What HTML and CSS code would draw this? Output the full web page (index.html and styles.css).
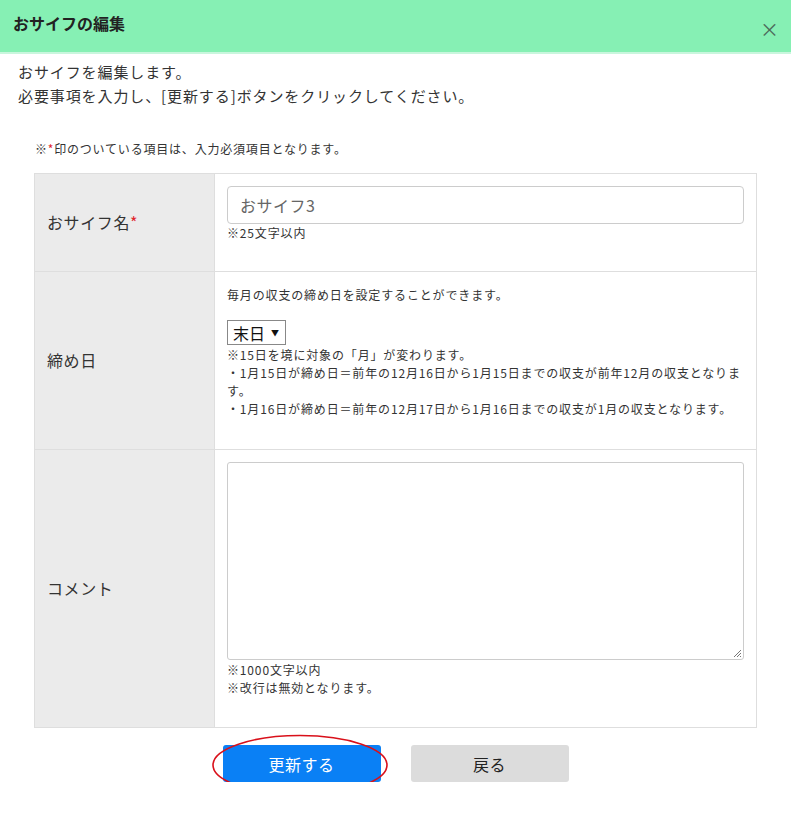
FILE: index.html
```html
<!DOCTYPE html>
<html lang="ja">
<head>
<meta charset="utf-8">
<title>おサイフの編集</title>
<link rel="stylesheet" href="styles.css">
</head>
<body>
<div class="header">
  <h1 class="title">おサイフの編集</h1>
  <span class="close">×</span>
</div>
<div class="intro">
  <p>おサイフを編集します。</p>
  <p>必要事項を入力し、[更新する]ボタンをクリックしてください。</p>
</div>
<p class="note">※<span class="req">*</span>印のついている項目は、入力必須項目となります。</p>
<div class="form">
  <div class="row row-name">
    <div class="label">おサイフ名<span class="req">*</span></div>
    <div class="field">
      <div class="input">おサイフ3</div>
      <p class="small">※25文字以内</p>
    </div>
  </div>
  <div class="row row-close">
    <div class="label">締め日</div>
    <div class="field">
      <p class="small desc">毎月の収支の締め日を設定することができます。</p>
      <div class="select">末日<span class="arrow">▼</span></div>
      <p class="small">※15日を境に対象の「月」が変わります。</p>
      <p class="small">・1月15日が締め日＝前年の12月16日から1月15日までの収支が前年12月の収支となります。</p>
      <p class="small">・1月16日が締め日＝前年の12月17日から1月16日までの収支が1月の収支となります。</p>
    </div>
  </div>
  <div class="row row-comment">
    <div class="label">コメント</div>
    <div class="field">
      <div class="textarea">
        <svg class="grip" width="9" height="9" viewBox="0 0 9 9"><path d="M8 1L1 8M8 4L4 8M8 7L7 8" stroke="#777" stroke-width="1"/></svg>
      </div>
      <p class="small">※1000文字以内</p>
      <p class="small">※改行は無効となります。</p>
    </div>
  </div>
</div>
<div class="buttons">
  <div class="btn-wrap">
    <button class="btn primary">更新する</button>
    <svg class="circle" width="180" height="64" viewBox="0 0 180 64"><ellipse cx="89" cy="31" rx="87" ry="29.5" fill="none" stroke="#d9101a" stroke-width="1.6"/></svg>
  </div>
  <button class="btn secondary">戻る</button>
</div>
</body>
</html>
```
FILE: styles.css
```css
body {
  margin: 0;
  font-family: "Noto Sans CJK JP", "Noto Sans", sans-serif;
  color: #333;
  background: #fff;
}
p { margin: 0; }
.header {
  height: 52px;
  background: #86f0b4;
  border-bottom: 2px solid #c9f6dd;
  display: flex;
  align-items: center;
  justify-content: space-between;
  padding: 0 14px 0 13px;
}
.title {
  margin: 0;
  font-size: 16px;
  font-weight: bold;
  color: #222;
  line-height: 1;
  position: relative;
  top: -3px;
}
.close {
  font-size: 19px;
  color: #4d6b5a;
  line-height: 1;
  position: relative;
  top: 2px;
  left: 2px;
}
.intro {
  padding: 6px 0 0 18px;
  font-size: 15px;
  line-height: 24px;
  letter-spacing: 0.9px;
}
.note {
  font-size: 12px;
  line-height: 18px;
  letter-spacing: 0.8px;
  margin: 32px 0 15px 35px;
}
.req { color: #e0242c; }
.form {
  margin: 0 34px;
  border: 1px solid #dedede;
  border-bottom: none;
}
.row {
  display: grid;
  grid-template-columns: 180px 1fr;
  border-bottom: 1px solid #dedede;
}
.label {
  background: #ebebeb;
  border-right: 1px solid #dedede;
  display: flex;
  align-items: center;
  padding-left: 12px;
  padding-bottom: 2px;
  font-size: 16px;
  letter-spacing: 0.6px;
}
.field {
  padding: 12px 12px 0 12px;
}
.small {
  font-size: 12px;
  line-height: 18px;
  letter-spacing: 0.85px;
}
.row-name { height: 97px; }
.input {
  height: 38px;
  box-sizing: border-box;
  border: 1px solid #ccc;
  border-radius: 4px;
  padding: 0 12px;
  font-size: 16px;
  line-height: 36px;
  color: #666;
  letter-spacing: 0.5px;
}
.row-close { height: 177px; }
.row-close .field { padding-top: 14px; }
.desc { margin-bottom: 16px; }
.select {
  display: inline-flex;
  align-items: center;
  height: 25px;
  box-sizing: border-box;
  border: 1px solid #888;
  padding: 0 6px 0 5px;
  font-size: 16px;
  color: #111;
  margin-bottom: 1px;
}
.arrow { font-size: 8px; margin-left: 6px; }
.row-comment { height: 277px; }
.textarea {
  height: 198px;
  box-sizing: border-box;
  border: 1px solid #ccc;
  border-radius: 3px;
  position: relative;
  margin-bottom: 1px;
}
.grip { position: absolute; right: 1px; bottom: 1px; }
.buttons {
  display: flex;
  justify-content: center;
  gap: 30px;
  margin-top: 17px;
}
.btn-wrap { position: relative; }
.btn {
  width: 158px;
  height: 37px;
  border: none;
  border-radius: 3px;
  font-family: inherit;
  font-size: 16px;
  letter-spacing: 0.5px;
  padding: 0;
}
.primary { background: #0a80f5; color: #fff; }
.secondary { background: #dcdcdc; color: #222; }
.circle {
  position: absolute;
  left: -12px;
  top: -11px;
  pointer-events: none;
}
```
